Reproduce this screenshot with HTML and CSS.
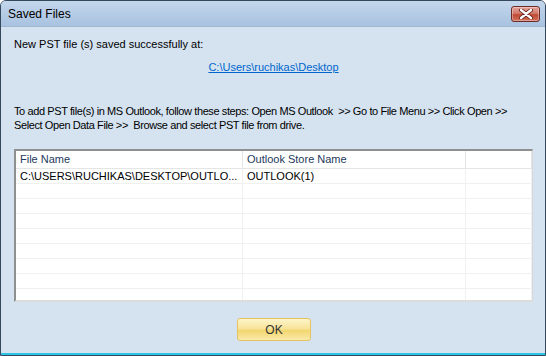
FILE: index.html
```html
<!DOCTYPE html>
<html lang="en">
<head>
    <meta charset="UTF-8">
    <title>Saved Files</title>
    <link rel="stylesheet" href="styles.css">
</head>
<body>
    <div class="window">
        <div class="titlebar">
            <span class="title">Saved Files</span>
            <div class="close">
                <svg width="14" height="10" viewBox="0 0 14 10">
                    <path d="M2 1 L12 9 M12 1 L2 9" stroke="#5a1a14" stroke-width="4" stroke-linecap="round"/>
                    <path d="M2 1 L12 9 M12 1 L2 9" stroke="#ffffff" stroke-width="2.4" stroke-linecap="round"/>
                </svg>
            </div>
        </div>
        <div class="client">
            <p class="msg">New PST file (s) saved successfully at:</p>
            <p class="path"><a href="#">C:\Users\ruchikas\Desktop</a></p>
            <p class="steps">To add PST file(s) in MS Outlook, follow these steps: Open MS Outlook &nbsp;&gt;&gt; Go to File Menu &gt;&gt; Click Open &gt;&gt;<br>Select Open Data File &gt;&gt; &nbsp;Browse and select PST file from drive.</p>
            <div class="listview">
                <div class="row head">
                    <div class="cell c1">File Name</div>
                    <div class="cell c2">Outlook Store Name</div>
                    <div class="cell c3"></div>
                </div>
                <div class="row">
                    <div class="cell c1">C:\USERS\RUCHIKAS\DESKTOP\OUTLO...</div>
                    <div class="cell c2">OUTLOOK(1)</div>
                    <div class="cell c3"></div>
                </div>
                <div class="row"><div class="cell c1"></div><div class="cell c2"></div><div class="cell c3"></div></div>
                <div class="row"><div class="cell c1"></div><div class="cell c2"></div><div class="cell c3"></div></div>
                <div class="row"><div class="cell c1"></div><div class="cell c2"></div><div class="cell c3"></div></div>
                <div class="row"><div class="cell c1"></div><div class="cell c2"></div><div class="cell c3"></div></div>
                <div class="row"><div class="cell c1"></div><div class="cell c2"></div><div class="cell c3"></div></div>
                <div class="row"><div class="cell c1"></div><div class="cell c2"></div><div class="cell c3"></div></div>
                <div class="row"><div class="cell c1"></div><div class="cell c2"></div><div class="cell c3"></div></div>
                <div class="row"><div class="cell c1"></div><div class="cell c2"></div><div class="cell c3"></div></div>
            </div>
            <div class="actions">
                <button class="ok">OK</button>
            </div>
        </div>
    </div>
</body>
</html>
```

FILE: styles.css
```css
body {
    margin: 0;
    width: 546px;
    height: 356px;
    overflow: hidden;
    font-family: "Liberation Sans", Arial, sans-serif;
    font-size: 11px;
    color: #000;
}

.window {
    width: 546px;
    height: 356px;
    box-sizing: border-box;
    border: 1px solid #34495e;
    border-radius: 6px 6px 0 0;
    background: #d5e3f1;
    display: flex;
    flex-direction: column;
    box-shadow: inset 0 -2px 0 #2ec4e6;
}

.titlebar {
    height: 25px;
    flex: none;
    display: flex;
    align-items: center;
    justify-content: space-between;
    padding: 0 5px 0 7px;
    background: linear-gradient(#c4d7ec, #a8c2e0);
    border-bottom: 1px solid #a0b8d4;
    border-radius: 5px 5px 0 0;
}

.title {
    font-size: 12px;
    color: #000;
}

.close {
    width: 29px;
    height: 16px;
    box-sizing: border-box;
    border: 1px solid #6e2a26;
    border-radius: 3px;
    background: linear-gradient(#e3a398 0%, #d37a6c 45%, #c04a34 55%, #d0705c 100%);
    display: flex;
    align-items: center;
    justify-content: center;
    box-shadow: inset 0 0 0 1px rgba(255, 255, 255, 0.35);
}

.client {
    flex: 1;
    padding: 0 12px 0 13px;
    display: flex;
    flex-direction: column;
}

.client p {
    margin: 0;
    line-height: 14px;
    white-space: nowrap;
}

.msg {
    margin-top: 10px !important;
}

.path {
    margin-top: 9px !important;
    text-align: center;
}

.path a {
    color: #0066cc;
    text-decoration: underline;
}

.steps {
    margin-top: 30px !important;
    letter-spacing: -0.4px;
}

.listview {
    margin-top: 17px;
    height: 153px;
    flex: none;
    box-sizing: border-box;
    background: #fff;
    border-top: 2px solid #8e8f8f;
    border-left: 2px solid #8e8f8f;
    border-right: 1px solid #d8d8d8;
    border-bottom: 2px solid #dcdcdc;
    overflow: hidden;
}

.row {
    display: flex;
    height: 14px;
    border-bottom: 1px solid #f0f0f0;
}

.row.head {
    height: 17px;
    border-bottom: 1px solid #e5e5e5;
    color: #1e395b;
}

.cell {
    box-sizing: border-box;
    padding-left: 4px;
    line-height: 14px;
    white-space: nowrap;
    overflow: hidden;
    border-right: 1px solid #f0f0f0;
}

.head .cell {
    line-height: 17px;
    border-right: 1px solid #e5e5e5;
}

.c1 {
    width: 227px;
}

.c2 {
    width: 223px;
}

.c3 {
    flex: 1;
}

.actions {
    display: flex;
    justify-content: center;
    margin-top: 16px;
}

.ok {
    width: 74px;
    height: 23px;
    margin-left: 1px;
    border: 1px solid #e5c365;
    border-radius: 3px;
    background: linear-gradient(#fdf4c8 0%, #f8e49a 45%, #f2d670 55%, #fbeaa8 100%);
    font-family: "Liberation Sans", Arial, sans-serif;
    font-size: 12px;
    color: #333;
    padding: 0;
}
```
